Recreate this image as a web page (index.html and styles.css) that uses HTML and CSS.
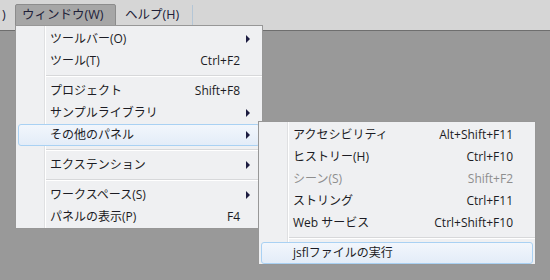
FILE: index.html
```html
<!DOCTYPE html>
<html lang="ja">
<head>
  <meta charset="UTF-8">
  <title>ウィンドウ メニュー</title>
  <link rel="stylesheet" href="styles.css">
</head>
<body>
  <div class="menubar">
    <span class="bar-item cut">)</span>
    <span class="bar-item open">ウィンドウ(W)</span>
    <span class="bar-item">ヘルプ(H)</span>
    <span class="bar-sep"></span>
  </div>

  <div class="menu main-menu">
    <div class="item"><span class="label">ツールバー(O)</span><span class="key"></span><span class="sub"></span></div>
    <div class="item"><span class="label">ツール(T)</span><span class="key">Ctrl+F2</span><span class="nosub"></span></div>
    <div class="sep"></div>
    <div class="item"><span class="label">プロジェクト</span><span class="key">Shift+F8</span><span class="nosub"></span></div>
    <div class="item"><span class="label">サンプルライブラリ</span><span class="key"></span><span class="sub"></span></div>
    <div class="item active"><span class="label">その他のパネル</span><span class="key"></span><span class="sub"></span></div>
    <div class="sep"></div>
    <div class="item"><span class="label">エクステンション</span><span class="key"></span><span class="sub"></span></div>
    <div class="sep"></div>
    <div class="item"><span class="label">ワークスペース(S)</span><span class="key"></span><span class="sub"></span></div>
    <div class="item"><span class="label">パネルの表示(P)</span><span class="key">F4</span><span class="nosub"></span></div>
  </div>

  <div class="menu sub-menu">
    <div class="item"><span class="label">アクセシビリティ</span><span class="key">Alt+Shift+F11</span><span class="nosub"></span></div>
    <div class="item"><span class="label">ヒストリー(H)</span><span class="key">Ctrl+F10</span><span class="nosub"></span></div>
    <div class="item disabled"><span class="label">シーン(S)</span><span class="key">Shift+F2</span><span class="nosub"></span></div>
    <div class="item"><span class="label">ストリング</span><span class="key">Ctrl+F11</span><span class="nosub"></span></div>
    <div class="item"><span class="label">Web サービス</span><span class="key">Ctrl+Shift+F10</span><span class="nosub"></span></div>
    <div class="sep"></div>
    <div class="item active"><span class="label">jsflファイルの実行</span><span class="key"></span><span class="nosub"></span></div>
  </div>
</body>
</html>
```

FILE: styles.css
```css
* {
  margin: 0;
  padding: 0;
  box-sizing: border-box;
}

body {
  font-family: "Open Sans", "Noto Sans CJK JP", sans-serif;
  font-size: 12px;
  color: #1c1c24;
  background: #999999;
  width: 550px;
  height: 280px;
  overflow: hidden;
  position: relative;
}

/* menu bar */
.menubar {
  height: 31px;
  background: #d6d6d6;
  border-bottom: 1px solid #6e6e6e;
  display: flex;
  align-items: flex-start;
  padding-top: 4px;
  font-size: 12.5px;
  color: #202038;
}

.bar-item {
  height: 22px;
  line-height: 19px;
  padding: 0 8px;
  border: 1px solid transparent;
}

.bar-item.cut {
  padding: 0 0 0 1px;
  width: 15px;
}

.bar-item.open {
  background: #a6a6a6;
  border-color: #8c8c8c;
  border-radius: 2px 2px 0 0;
  width: 101px;
  padding-left: 6px;
}

.bar-sep {
  width: 1px;
  height: 21px;
  background: #b4c6d6;
  margin-left: 4px;
  margin-top: 1px;
}

/* drop-down menus */
.menu {
  position: absolute;
  border: 1px solid #979797;
  padding: 2px 0;
  background: linear-gradient(to right, #eff0f2 28px, #dfe0e2 28px, #dfe0e2 29px, #ffffff 29px, #ffffff 30px, #eff0f2 30px);
}

.main-menu {
  left: 15px;
  top: 25px;
  width: 248px;
  height: 204px;
}

.sub-menu {
  left: 258px;
  top: 121px;
  width: 278px;
  height: 144px;
}

.item {
  display: flex;
  align-items: center;
  height: 22px;
  margin: 0 2px;
  padding-left: 31px;
  padding-bottom: 2px;
  border: 1px solid transparent;
  border-radius: 3px;
  white-space: nowrap;
}

.item .label {
  flex: 1;
}

.item .key {
  text-align: right;
}

.item .sub,
.item .nosub {
  width: 19px;
  flex: none;
}

.item .sub::after {
  content: "";
  display: block;
  margin-left: 6px;
  margin-top: 2px;
  width: 0;
  height: 0;
  border-left: 4px solid #1c1c40;
  border-top: 4px solid transparent;
  border-bottom: 4px solid transparent;
}

.item.active {
  border-color: #a9d1f3;
  background: linear-gradient(#f2f6fc, #e3ecf8);
}

.item.disabled {
  color: #8e8e8e;
}

.sep {
  height: 8px;
  margin-left: 30px;
  padding-top: 3px;
}

.sep::before {
  content: "";
  display: block;
  height: 1px;
  background: #d7d8da;
  border-bottom: 1px solid #ffffff;
  box-sizing: content-box;
}
```
